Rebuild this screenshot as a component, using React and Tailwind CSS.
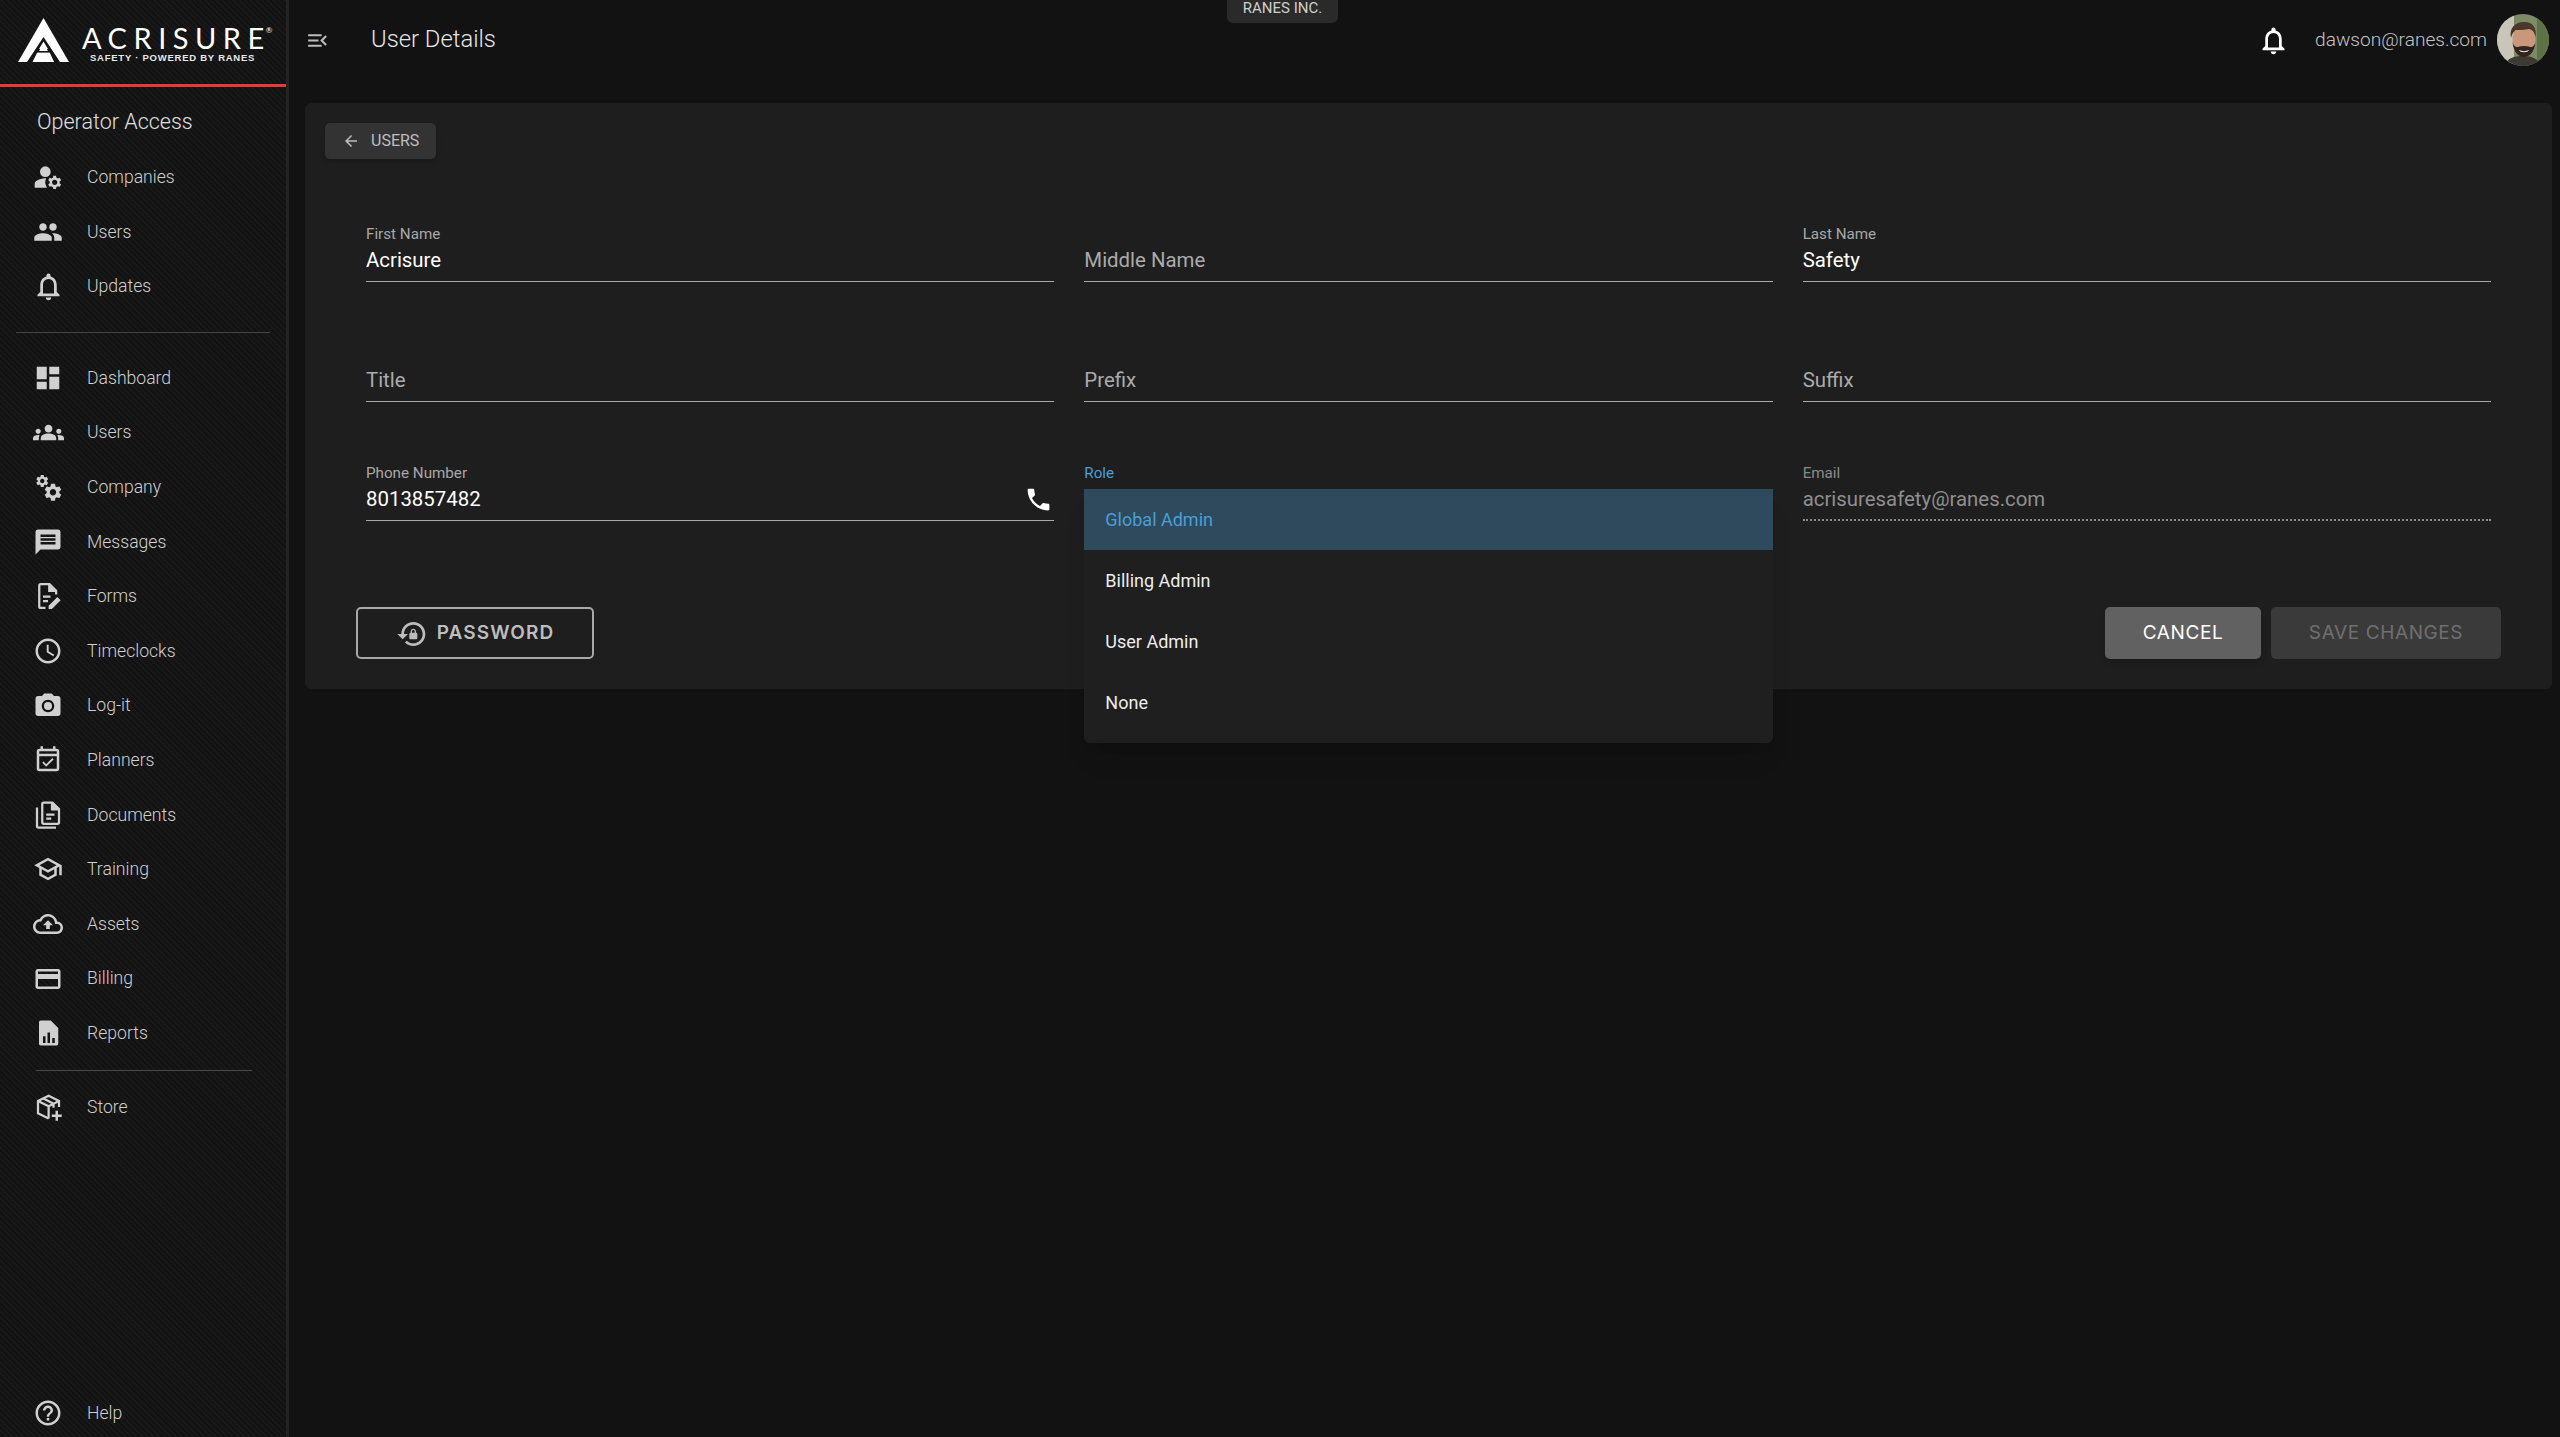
import {
  MdArrowBack,
  MdCameraAlt,
  MdCreditCard,
  MdDashboard,
  MdGroups,
  MdHelpOutline,
  MdManageAccounts,
  MdMenuOpen,
  MdMessage,
  MdNotificationsNone,
  MdOutlineAccessTime,
  MdOutlineCloudUpload,
  MdOutlineEventAvailable,
  MdOutlineSchool,
  MdPeople,
  MdPhone,
} from 'react-icons/md';

const GEAR =
  'M19.14 12.94c.04-.3.06-.61.06-.94 0-.32-.02-.64-.07-.94l2.03-1.58c.18-.14.23-.41.12-.61l-1.92-3.32c-.12-.22-.37-.29-.59-.22l-2.39.96c-.5-.38-1.03-.7-1.62-.94l-.36-2.54c-.04-.24-.24-.41-.48-.41h-3.84c-.24 0-.43.17-.47.41l-.36 2.54c-.59.24-1.13.57-1.62.94l-2.39-.96c-.22-.08-.47 0-.59.22L2.74 8.87c-.12.21-.08.47.12.61l2.03 1.58c-.05.3-.09.63-.09.94s.02.64.07.94l-2.03 1.58c-.18.14-.23.41-.12.61l1.92 3.32c.12.22.37.29.59.22l2.39-.96c.5.38 1.03.7 1.62.94l.36 2.54c.05.24.24.41.48.41h3.84c.24 0 .44-.17.47-.41l.36-2.54c.59-.24 1.13-.56 1.62-.94l2.39.96c.22.08.47 0 .59-.22l1.92-3.32c.12-.22.07-.47-.12-.61l-2.01-1.58zM12 15.6c-1.98 0-3.6-1.62-3.6-3.6s1.62-3.6 3.6-3.6 3.6 1.62 3.6 3.6-1.62 3.6-3.6 3.6z';

const GearsIcon = ({ className }) => (
  <svg viewBox="0 0 24 24" className={className} fill="currentColor">
    <path d={GEAR} transform="translate(1.4 1.2) scale(0.5)" />
    <path d={GEAR} transform="translate(7.6 7.8) scale(0.7)" />
  </svg>
);

const FormsIcon = ({ className }) => (
  <svg viewBox="0 0 24 24" className={className} fill="none" stroke="currentColor" strokeWidth="1.8">
    <path d="M10 21.500H6.200c-.8 0-1.200-.5-1.200-1.200V3.700c0-.7.4-1.200 1.200-1.200h7l5.300 5.300v3" />
    <path d="M13 2.500v5.300h5.500" fill="currentColor" />
    <path d="M8 12.500h6M8 16h4" />
    <path d="M12.500 22.300v-2.600l7-7 2.600 2.600-7 7z" fill="currentColor" stroke="none" />
  </svg>
);

const DocumentsIcon = ({ className }) => (
  <svg viewBox="0 0 24 24" className={className} fill="none" stroke="currentColor" strokeWidth="1.8">
    <path d="M3.200 6v14.800c0 .7.5 1.200 1.200 1.200h14" />
    <path d="M7.400 17.800V3.200c0-.7.4-1.200 1.200-1.200h7l5.200 5.200v10.600c0 .7-.4 1.200-1.200 1.200H8.600c-.8 0-1.200-.5-1.200-1.200z" />
    <path d="M15.200 2v5.400h5.400" fill="currentColor" />
    <path d="M10.600 11.600h6.600M10.600 14.800h4" />
  </svg>
);

const ReportsIcon = ({ className }) => (
  <svg viewBox="0 0 24 24" className={className}>
    <path d="M6.200 2h8l6 6v12.600c0 .8-.6 1.400-1.400 1.400H6.200c-.8 0-1.400-.6-1.400-1.400V3.400C4.800 2.600 5.400 2 6.200 2z" fill="currentColor" />
    <path d="M8 14.500h2V20H8zM11.600 11.500h2V20h-2zM15.400 16h2v4h-2z" fill="#151515" />
  </svg>
);

const StoreIcon = ({ className }) => (
  <svg viewBox="0 0 24 24" className={className} fill="none" stroke="currentColor" strokeWidth="1.8">
    <path d="M12.500 21.200 4 17V7.200L12.500 3 20.800 7.200V12" />
    <path d="M4 7.200l8.500 4.200 8.300-4.200M12.500 11.400v9.800M8 5l8.400 4.300v3.200" />
    <path d="M19 15v8M15 19h8" strokeWidth="2" />
  </svg>
);

const CardIcon = ({ className }) => <MdCreditCard className={className} />;

const PasswordIcon = ({ className }) => (
  <svg viewBox="0 0 24 24" className={className} fill="currentColor">
    <path d="M13 3c-4.97 0-9 4.03-9 9H1l4 3.99L9 12H6c0-3.87 3.13-7 7-7s7 3.13 7 7-3.13 7-7 7c-1.9 0-3.62-.76-4.88-1.99L6.7 18.42C8.32 20.01 10.55 21 13 21c4.97 0 9-4.03 9-9s-4.03-9-9-9zm2 8v-1c0-1.1-.9-2-2-2s-2 .9-2 2v1c-.55 0-1 .45-1 1v3c0 .55.45 1 1 1h4c.55 0 1-.45 1-1v-3c0-.55-.45-1-1-1zm-1 0h-2v-1c0-.55.45-1 1-1s1 .45 1 1v1z" />
  </svg>
);

const LogoMark = () => (
  <svg viewBox="0 0 51 44" className="w-[51px] h-[44px] shrink-0">
    <path d="M25.500 0 51 44H0z" fill="#fff" />
    <path d="M25.500 19 42 44h-6l-10.500-19L15 44H9z" fill="#141414" />
    <path d="M25.500 23.500 30 31H21z" fill="#fff" />
    <path d="M19.500 34h12L36 44H14.500z" fill="#fff" />
    <path d="M18 33h15v1.600H18z" fill="#141414" />
  </svg>
);

const Avatar = () => (
  <svg viewBox="0 0 52 52" className="w-[52px] h-[52px] rounded-full shrink-0">
    <rect width="52" height="52" fill="#7c8a66" />
    <rect width="17" height="52" fill="#c9c5bb" />
    <rect x="40" width="12" height="52" fill="#5e7345" />
    <path d="M8 52c2-8 9-10 18-10s16 3 18 10z" fill="#3d3a34" />
    <ellipse cx="27" cy="26" rx="11.500" ry="15" fill="#c99779" />
    <path d="M15.500 28c1 10 6 15 11.500 15s10.500-5 11.500-15c-1 4-3 5-5 5-4-1.500-9-1.500-13 0-2 0-4-1-5-5z" fill="#33251c" />
    <path d="M14 24c-2-9 3-16 13-16 9 0 13 6 11.500 15-1-5-3-7-6-8-5 1-11 1-14 1-2 2-3.500 4-4.500 8z" fill="#4a382b" />
    <path d="M22 36c3 1.500 7 1.500 10 0-1 3-9 3-10 0z" fill="#eee" />
  </svg>
);

const primaryNav = [
  { label: 'Companies', Icon: MdManageAccounts, iconClass: 'w-[32px] h-[32px]' },
  { label: 'Users', Icon: MdPeople },
  { label: 'Updates', Icon: MdNotificationsNone, iconClass: 'w-[33px] h-[33px]' },
];

const mainNav = [
  { label: 'Dashboard', Icon: MdDashboard },
  { label: 'Users', Icon: MdGroups, iconClass: 'w-[31px] h-[31px]' },
  { label: 'Company', Icon: GearsIcon },
  { label: 'Messages', Icon: MdMessage },
  { label: 'Forms', Icon: FormsIcon },
  { label: 'Timeclocks', Icon: MdOutlineAccessTime },
  { label: 'Log-it', Icon: MdCameraAlt },
  { label: 'Planners', Icon: MdOutlineEventAvailable },
  { label: 'Documents', Icon: DocumentsIcon },
  { label: 'Training', Icon: MdOutlineSchool },
  { label: 'Assets', Icon: MdOutlineCloudUpload },
  { label: 'Billing', Icon: CardIcon },
  { label: 'Reports', Icon: ReportsIcon },
];

const NavItem = ({ label, Icon, iconClass = 'w-[30px] h-[30px]', height = 'h-[54.6px]' }) => (
  <a className={`flex items-center ${height} text-[#d0d0d0]`}>
    <span className="w-[87px] flex justify-center pl-[10px] pr-[1px]">
      <Icon className={iconClass} />
    </span>
    <span className="text-[17.6px] font-light">{label}</span>
  </a>
);

const Field = ({ label, value, labelClass = 'text-[#a8a8a8]', valueClass = 'text-white', line = 'border-b-[1.5px] border-solid border-[#a9a9a9]', children }) => (
  <div className={`relative h-[56px] flex flex-col ${line}`}>
    <div className={`mt-[1px] h-[15px] leading-[15px] text-[15.2px] ${labelClass}`}>{label}</div>
    <div className={`mt-[6px] h-[24px] leading-[24px] text-[20.4px] ${valueClass}`}>{value}</div>
    {children}
  </div>
);

const EmptyField = ({ label }) => (
  <div className="h-[56px] flex flex-col justify-end border-b-[1.5px] border-[#a9a9a9]">
    <div className="h-[24px] mb-[9px] leading-[24px] text-[20.4px] text-[#ababab]">{label}</div>
  </div>
);

const roles = ['Global Admin', 'Billing Admin', 'User Admin', 'None'];

const App = () => {
  return (
    <div className="flex w-full h-[1437px] overflow-hidden bg-[#121212] font-['Roboto',sans-serif] text-white">
      <aside className="w-[289px] shrink-0 flex flex-col border-r-[3px] border-[#232323] bg-[#151515] bg-[repeating-linear-gradient(45deg,#181818_0px,#181818_2px,#121212_2px,#121212_4px)]">
        <div className="h-[87px] shrink-0 border-b-[3px] border-[#e53a35] flex items-start pl-[18px] pt-[18px]">
          <LogoMark />
          <div className="ml-[13px] pt-[6px] text-white">
            <div className="flex items-start h-[27px] leading-[27px] text-[29px] tracking-[6.5px] font-['Lato',sans-serif] font-normal">
              ACRISURE
              <span className="text-[8px] leading-[12px] tracking-normal ml-[-5px]">®</span>
            </div>
            <div className="mt-[1px] ml-[8px] h-[12px] leading-[12px] text-[9.5px] font-bold tracking-[0.75px] font-['Liberation_Sans',sans-serif] text-[#e8e8e8] whitespace-nowrap">
              SAFETY · POWERED BY RANES
            </div>
          </div>
        </div>

        <div className="pl-[37px] pt-[21px] pb-[14px] h-[63px] text-[21.5px] leading-[28px] font-light text-[#e0e0e0]">Operator Access</div>
        <nav>
          {primaryNav.map((item) => (
            <NavItem key={item.label} {...item} />
          ))}
        </nav>
        <div className="mt-[18px] ml-[16px] w-[254px] h-[1px] bg-[#444]" />
        <nav className="mt-[18px]">
          {mainNav.map((item) => (
            <NavItem key={item.label} {...item} />
          ))}
        </nav>
        <div className="mt-[9px] ml-[36px] w-[216px] h-[1px] bg-[#4a4a4a]" />
        <div className="mt-[9px]">
          <NavItem label="Store" Icon={StoreIcon} />
        </div>
        <div className="mt-auto">
          <NavItem label="Help" Icon={MdHelpOutline} height="h-[48px]" />
        </div>
      </aside>

      <div className="flex-1 min-w-0 relative">
        {/* company tab hanging off the top of the page */}
        <div className="absolute left-[938px] top-0 w-[111px] h-[23px] rounded-b-[6px] bg-[#2a2a2a] text-[#cfcfcf] text-[15px] leading-[16px] text-center">
          RANES INC.
        </div>

        <header className="h-[80px] flex items-center pl-[16px] pr-[11px]">
          <MdMenuOpen className="w-[25px] h-[25px] text-[#bdbdbd]" />
          <h1 className="ml-[41px] text-[23.8px] font-light text-[#e6e6e6]">User Details</h1>
          <div className="ml-auto flex items-center">
            <MdNotificationsNone className="w-[33px] h-[33px] text-white" />
            <span className="ml-[25px] text-[19.1px] font-light text-[#c4c4c4]">dawson@ranes.com</span>
            <span className="ml-[10px]"><Avatar /></span>
          </div>
        </header>

        <main className="mt-[23px] ml-[16px] mr-[8px] bg-[#1e1e1e] rounded-[6px] pt-[20px] pb-[30px] px-[20px]">
          <button className="flex items-center w-[111px] h-[36px] rounded-[5px] bg-[#333333] pl-[17px] text-[#bdbdbd] shadow-md">
            <MdArrowBack className="w-[18px] h-[18px]" />
            <span className="ml-[11px] text-[16px]">USERS</span>
          </button>

          <form className="mt-[67px] mx-[41px] grid grid-cols-3 gap-x-[30px] gap-y-[63.5px]">
            <Field label="First Name" value="Acrisure" />
            <EmptyField label="Middle Name" />
            <Field label="Last Name" value="Safety" />
            <EmptyField label="Title" />
            <EmptyField label="Prefix" />
            <EmptyField label="Suffix" />
            <Field label="Phone Number" value="8013857482">
              <MdPhone className="absolute right-[1px] top-[20px] w-[29px] h-[29px] text-white" />
            </Field>
            <Field label="Role" labelClass="text-[#4a9fd8]" value="">
              {/* open role menu */}
              <ul className="absolute z-10 left-0 top-[24px] w-[689px] pb-[10px] bg-[#1f1f1f] rounded-b-[6px] shadow-xl text-[18px]">
                {roles.map((role, i) => (
                  <li
                    key={role}
                    className={`h-[61px] flex items-center pl-[21px] ${i === 0 ? 'bg-[#2e4a5c] text-[#4a9fd8]' : 'text-[#ededed]'}`}
                  >
                    {role}
                  </li>
                ))}
              </ul>
            </Field>
            <Field
              label="Email"
              value="acrisuresafety@ranes.com"
              labelClass="text-[#8a8a8a]"
              valueClass="text-[#8f8f8f]"
              line="border-b-2 border-dotted border-[#8f8f8f]"
            />
          </form>

          <div className="mt-[86px] mx-[31px] flex items-center font-['Inter',sans-serif] text-[19px] tracking-[0.6px]">
            <button className="w-[238px] h-[52px] pt-[1px] flex items-center justify-center rounded-[5px] border-2 border-[#a8a8a8] text-[#bdbdbd] font-semibold tracking-[1.1px]">
              <PasswordIcon className="w-[32px] h-[32px] mr-[9px]" />
              PASSWORD
            </button>
            <button className="ml-auto w-[156px] h-[52px] pt-[1px] rounded-[5px] bg-[#616161] text-white shadow-md">CANCEL</button>
            <button className="ml-[10px] w-[230px] h-[52px] pt-[1px] rounded-[5px] bg-[#3a3a3a] text-[#6f6f6f]">SAVE CHANGES</button>
          </div>
        </main>
      </div>
    </div>
  );
};

export default App;
